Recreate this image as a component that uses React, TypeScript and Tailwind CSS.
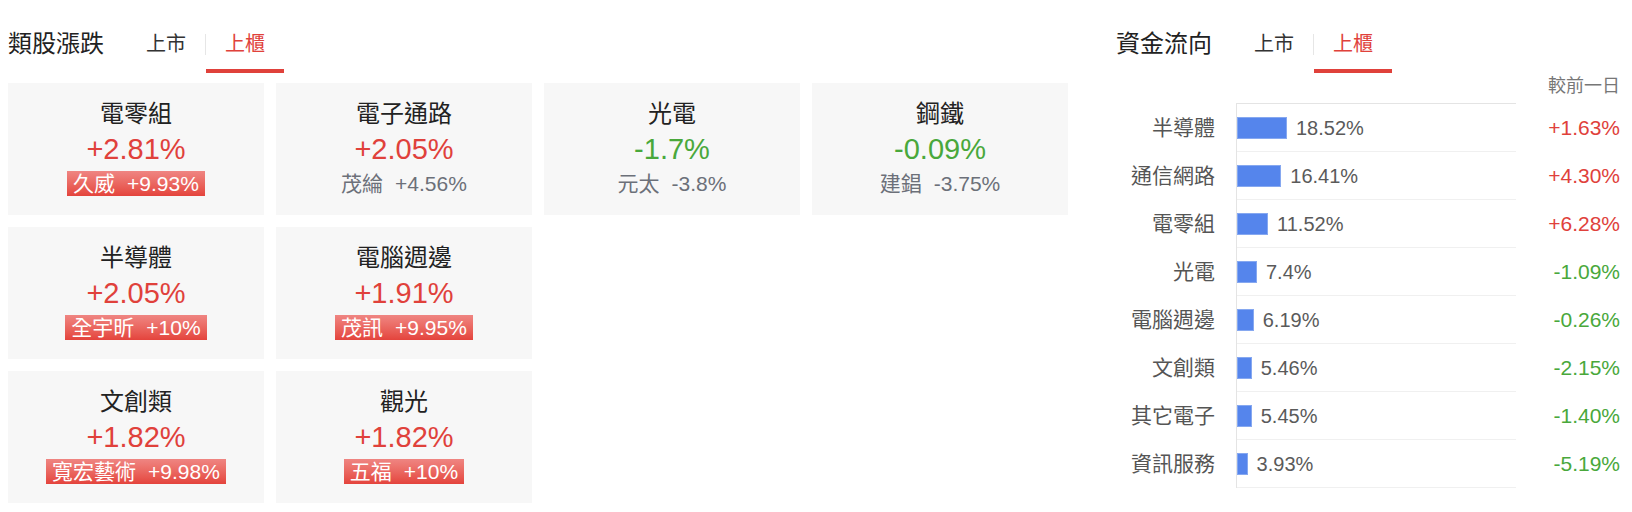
import React from "react";

type Sector = {
  name: string;
  change: string;
  leader: string;
  leaderChange: string;
  limitUp?: boolean;
};

type Flow = { name: string; share: number; diff: string };

// rows of sector cards: the first row is full, the others hold two
const sectorRows: Sector[][] = [
  [
    { name: "電零組", change: "+2.81%", leader: "久威", leaderChange: "+9.93%", limitUp: true },
    { name: "電子通路", change: "+2.05%", leader: "茂綸", leaderChange: "+4.56%" },
    { name: "光電", change: "-1.7%", leader: "元太", leaderChange: "-3.8%" },
    { name: "鋼鐵", change: "-0.09%", leader: "建錩", leaderChange: "-3.75%" },
  ],
  [
    { name: "半導體", change: "+2.05%", leader: "全宇昕", leaderChange: "+10%", limitUp: true },
    { name: "電腦週邊", change: "+1.91%", leader: "茂訊", leaderChange: "+9.95%", limitUp: true },
  ],
  [
    { name: "文創類", change: "+1.82%", leader: "寬宏藝術", leaderChange: "+9.98%", limitUp: true },
    { name: "觀光", change: "+1.82%", leader: "五福", leaderChange: "+10%", limitUp: true },
  ],
];

const flows: Flow[] = [
  { name: "半導體", share: 18.52, diff: "+1.63%" },
  { name: "通信網路", share: 16.41, diff: "+4.30%" },
  { name: "電零組", share: 11.52, diff: "+6.28%" },
  { name: "光電", share: 7.4, diff: "-1.09%" },
  { name: "電腦週邊", share: 6.19, diff: "-0.26%" },
  { name: "文創類", share: 5.46, diff: "-2.15%" },
  { name: "其它電子", share: 5.45, diff: "-1.40%" },
  { name: "資訊服務", share: 3.93, diff: "-5.19%" },
];

const isUp = (v: string) => v.startsWith("+");

function Header({ title }: { title: string }) {
  return (
    <div className="flex h-[57px] mt-[16px]">
      <div className="flex items-center pt-[3px] pb-[4px] text-[24px] leading-[32px] text-[#222]">{title}</div>
      <div className="ml-[23px] flex w-[78px] justify-center items-center pt-[3px] border-b-4 border-transparent text-[20px] text-[#333]">
        上市
      </div>
      <div className="self-center w-px h-[21px] bg-[#e6e6e6]" />
      <div className="flex w-[78px] justify-center items-center pt-[3px] border-b-4 border-[#e0413b] text-[20px] text-[#e0413b]">
        上櫃
      </div>
    </div>
  );
}

function SectorCard({ s }: { s: Sector }) {
  const color = isUp(s.change) ? "text-[#e0413b]" : "text-[#49a83b]";
  return (
    <div className="h-[132px] bg-[#f7f7f7] flex flex-col items-center pt-[15px]">
      <div className="text-[24px] leading-[32px] text-[#222]">{s.name}</div>
      <div className={`mt-[2px] text-[29px] leading-[34px] ${color}`}>{s.change}</div>
      {s.limitUp ? (
        <div className="mt-[5px] h-[25px] px-[6px] flex gap-3 items-center text-[21px] leading-[25px] text-white bg-gradient-to-b from-[#ef8582] to-[#e4433c]">
          <span>{s.leader}</span>
          <span>{s.leaderChange}</span>
        </div>
      ) : (
        <div className="mt-[5px] h-[25px] flex gap-3 items-center text-[21px] leading-[25px] text-[#6c7079]">
          <span>{s.leader}</span>
          <span>{s.leaderChange}</span>
        </div>
      )}
    </div>
  );
}

export default function App() {
  return (
    <div
      className="flex w-[1632px] h-[512px] bg-white pl-2 pr-3"
      style={{ fontFamily: '"Liberation Sans", "Noto Sans CJK TC", sans-serif' }}
    >
      {/* sector movers */}
      <div className="w-[1060px] flex flex-col">
        <Header title="類股漲跌" />
        <div className="mt-[10px] flex flex-col gap-3">
          {sectorRows.map((row, i) => (
            <div key={i} className="grid grid-cols-4 gap-3">
              {row.map((s) => (
                <SectorCard key={s.name} s={s} />
              ))}
            </div>
          ))}
        </div>
      </div>

      {/* money flow */}
      <div className="ml-[48px] flex-1 flex flex-col">
        <Header title="資金流向" />
        <div className="mt-[1px] text-right text-[18px] leading-[24px] text-[#777]">較前一日</div>
        <div className="mt-[5px] flex">
          <div className="w-[120px] flex flex-col pt-[1px]">
            {flows.map((f) => (
              <div key={f.name} className="h-[48px] flex items-center justify-end pr-[21px] text-[21px] text-[#555]">
                {f.name}
              </div>
            ))}
          </div>
          <div className="w-[280px] flex flex-col border-l border-t border-[#e4e4e4]">
            {flows.map((f) => (
              <div key={f.name} className="h-[48px] flex items-center border-b border-[#f0f0f0]">
                <div className="h-[22px] bg-[#5585ec] border border-[#86a8f0]" style={{ width: f.share * 2.7 }} />
                <span className="ml-[9px] text-[20px] text-[#5a5a5a]">{f.share}%</span>
              </div>
            ))}
          </div>
          <div className="flex-1 flex flex-col pt-[1px]">
            {flows.map((f) => (
              <div
                key={f.name}
                className={`h-[48px] flex items-center justify-end text-[21px] ${isUp(f.diff) ? "text-[#e0413b]" : "text-[#49a83b]"}`}
              >
                {f.diff}
              </div>
            ))}
          </div>
        </div>
      </div>
    </div>
  );
}
